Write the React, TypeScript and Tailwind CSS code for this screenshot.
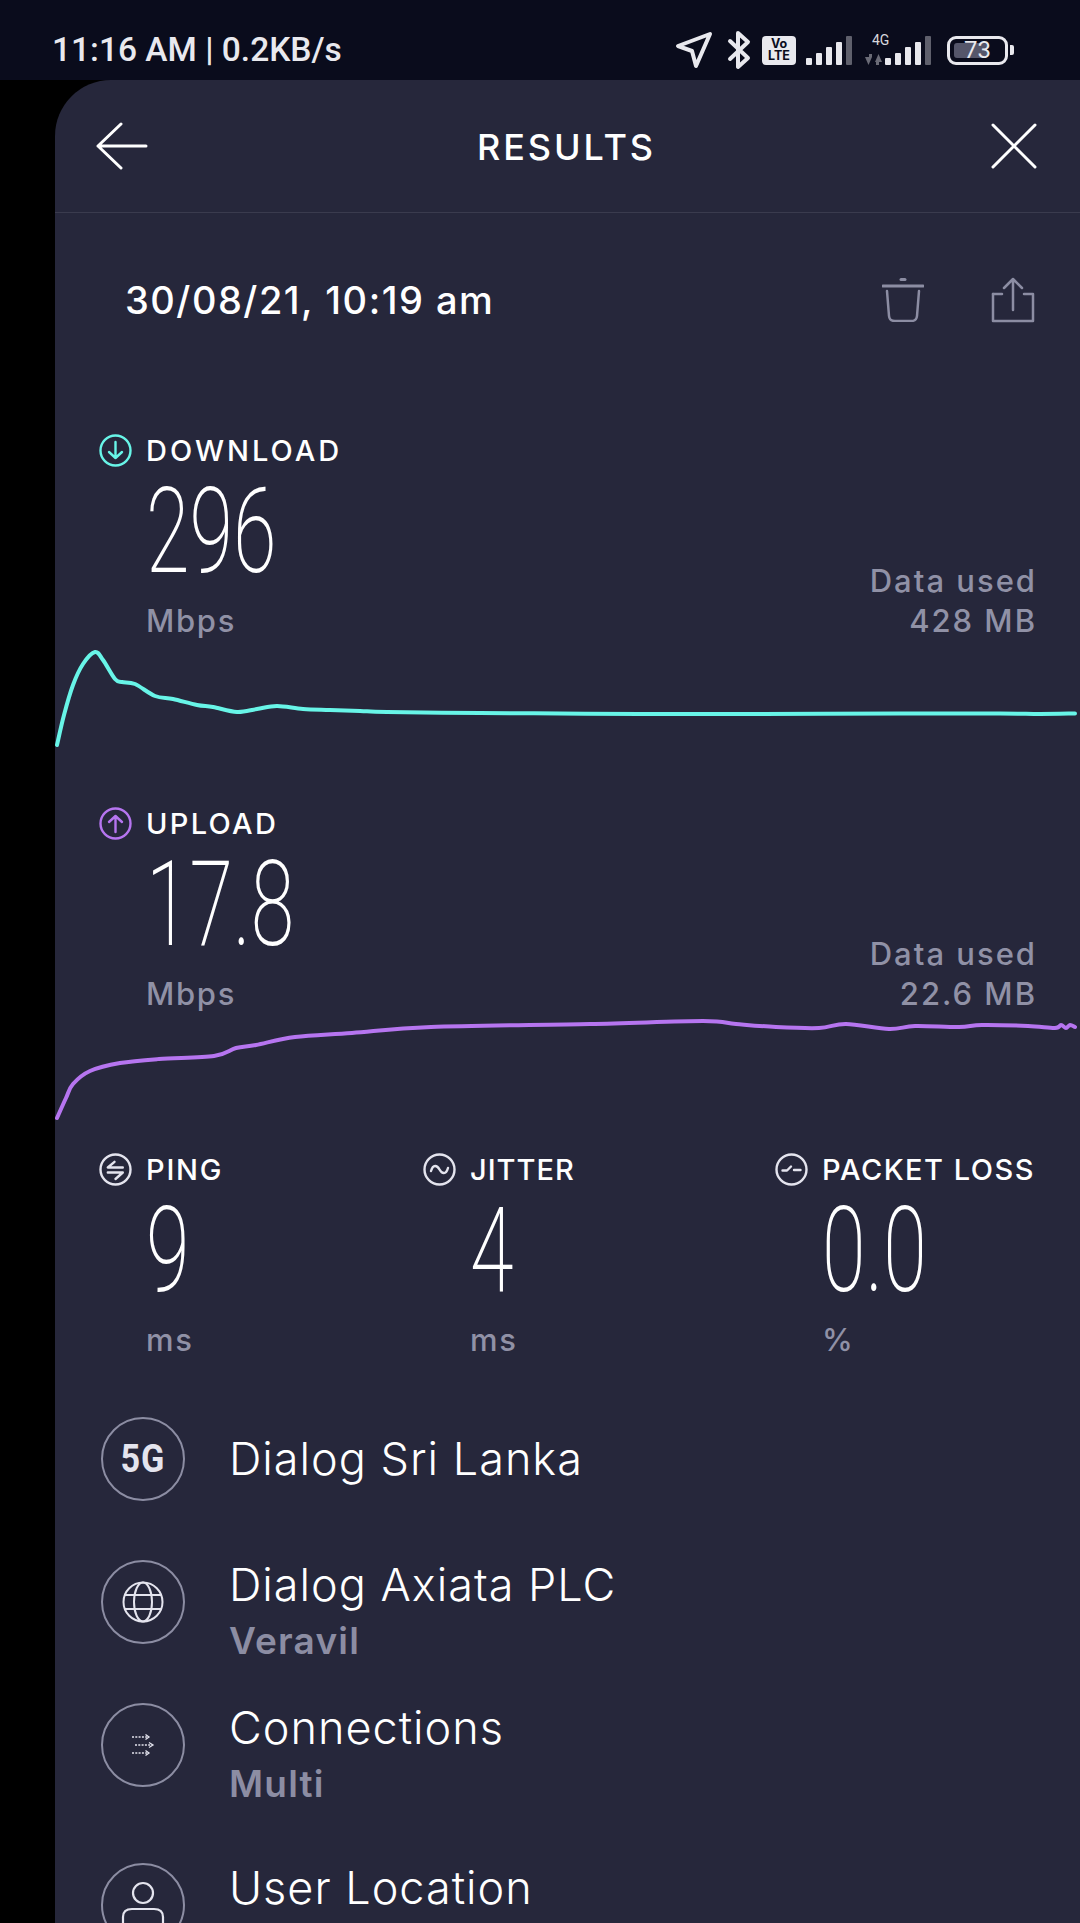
const downloadCurve: [number, number][] = [
  [57, 745], [64, 715], [73, 685], [83, 664], [95, 652], [103, 660], [115, 679], [122, 682], [135, 684], [155, 696],
  [173, 699], [197, 705], [213, 707], [237, 712], [257, 709], [277, 706], [303, 709], [330, 710], [360, 711], [387, 712],
  [480, 713], [560, 713.5], [640, 714], [760, 714], [900, 713.5], [1000, 713.5], [1040, 714], [1075, 713.5],
];

const uploadCurve: [number, number][] = [
  [57, 1118], [66, 1098], [73, 1084], [90, 1071], [120, 1063], [159, 1059], [214, 1056], [236, 1048], [256, 1045], [295, 1037],
  [352, 1033], [431, 1027], [590, 1024], [703, 1021], [736, 1024], [776, 1027], [819, 1028], [846, 1024], [889, 1029], [915, 1026],
  [959, 1027], [982, 1025], [1028, 1026], [1055, 1028], [1061, 1025], [1066, 1028], [1070, 1025], [1075, 1027],
];

function smoothPath(pts: [number, number][]) {
  let d = `M${pts[0][0]} ${pts[0][1]}`;
  for (let i = 0; i < pts.length - 1; i++) {
    const p0 = pts[i - 1] ?? pts[i];
    const p1 = pts[i];
    const p2 = pts[i + 1];
    const p3 = pts[i + 2] ?? p2;
    const c1x = p1[0] + (p2[0] - p0[0]) / 6;
    const c1y = p1[1] + (p2[1] - p0[1]) / 6;
    const c2x = p2[0] - (p3[0] - p1[0]) / 6;
    const c2y = p2[1] - (p3[1] - p1[1]) / 6;
    d += ` C${c1x} ${c1y} ${c2x} ${c2y} ${p2[0]} ${p2[1]}`;
  }
  return d;
}

function Ring({ color, children }: { color: string; children: React.ReactNode }) {
  return (
    <svg width="33" height="33" viewBox="0 0 33 33" fill="none" stroke={color} strokeWidth="2.4" strokeLinecap="round" strokeLinejoin="round" className="shrink-0">
      <circle cx="16.5" cy="16.5" r="15" />
      {children}
    </svg>
  );
}

function Metric({ icon, label, tracking, value, unit, used }: { icon: React.ReactNode; label: string; tracking: string; value: string; unit: string; used: string }) {
  return (
    <div className="flex items-end justify-between pl-[44px] pr-[43px]">
      <div>
        <Label icon={icon} text={label} tracking={tracking} />
        <BigValue value={value} />
        <Unit text={unit} />
      </div>
      <div className="text-right font-['Inter',sans-serif] text-[31px] font-medium leading-[40px] tracking-[2px] text-[#9091a6]">
        <div>Data used</div>
        <div>{used}</div>
      </div>
    </div>
  );
}

function Label({ icon, text, tracking }: { icon: React.ReactNode; text: string; tracking: string }) {
  return (
    <div className="flex h-[40px] items-center gap-[14px]">
      {icon}
      <span className={`whitespace-nowrap pt-[2px] font-['Inter',sans-serif] text-[29px] font-medium text-white ${tracking}`}>{text}</span>
    </div>
  );
}

function BigValue({ value }: { value: string }) {
  return (
    <div className="h-[118px] pl-[47px] pt-[7px]">
      <div className="origin-left scale-x-[0.67] whitespace-nowrap font-['Roboto',sans-serif] text-[118px] font-[175] leading-[111px] text-white">{value}</div>
    </div>
  );
}

function Unit({ text }: { text: string }) {
  return <div className="mt-[13px] pl-[47px] font-['Inter',sans-serif] text-[31px] font-medium leading-[40px] tracking-[1.7px] text-[#9091a6]">{text}</div>;
}

function Stat({ icon, label, tracking, value, unit }: { icon: React.ReactNode; label: string; tracking: string; value: string; unit: string }) {
  return (
    <div>
      <Label icon={icon} text={label} tracking={tracking} />
      <BigValue value={value} />
      <Unit text={unit} />
    </div>
  );
}

function InfoRow({ icon, title, sub, center }: { icon: React.ReactNode; title: string; sub?: string; center?: boolean }) {
  return (
    <div className={`flex gap-[44px] ${center ? "items-center" : "items-start"}`}>
      <div className="flex h-[84px] w-[84px] shrink-0 items-center justify-center rounded-full border-[2.5px] border-[#8c8da3]">{icon}</div>
      <div className="font-['Inter',sans-serif]">
        <div className="whitespace-nowrap text-[45px] font-light leading-[50px] tracking-[1px] text-white">{title}</div>
        {sub && <div className="mt-[11px] text-[37px] font-semibold leading-[40px] tracking-[1.2px] text-[#8c8da3]">{sub}</div>}
      </div>
    </div>
  );
}

function Bars({ width }: { width: number }) {
  const xs = [0, 10, 20, 30, 40];
  const tops = [22, 17, 11, 6, 0];
  return (
    <svg width={width} height="29" viewBox="0 0 46 29" className="shrink-0">
      {xs.map((x, i) => (
        <rect key={x} x={x} y={tops[i]} width="6" height={29 - tops[i]} rx="1" fill={i === 4 ? "#5f606c" : "#e9e9ee"} />
      ))}
    </svg>
  );
}

function StatusBar() {
  return (
    <div className="flex h-[80px] shrink-0 items-center justify-between bg-[#0a0c1c] pl-[52px] pr-[66px] pt-[20px]">
      <span className="font-['Roboto',sans-serif] text-[33.5px] font-medium text-[#e9e9ee]">11:16 AM | 0.2KB/s</span>
      <div className="flex items-center">
        <svg width="38" height="38" viewBox="0 0 38 38" fill="none" stroke="#e9e9ee" strokeWidth="4" strokeLinejoin="round" className="shrink-0">
          <path d="M3 15 L35 3 L21 35 L17 20 Z" />
        </svg>
        <svg width="24" height="40" viewBox="0 0 24 40" fill="none" stroke="#e9e9ee" strokeWidth="4" strokeLinecap="round" strokeLinejoin="round" className="ml-[14px] shrink-0">
          <path d="M3 11 L21 28 L11 37 V3 L21 12 L3 29" />
        </svg>
        <div className="ml-[11px] flex h-[29px] w-[34px] shrink-0 flex-col items-center justify-center rounded-[4px] bg-[#e9e9ee] font-['Inter',sans-serif] text-[12.5px] font-bold leading-[12px] text-[#0a0c1c]">
          <span>Vo</span>
          <span>LTE</span>
        </div>
        <div className="ml-[10px]">
          <Bars width={46} />
        </div>
        <div className="relative ml-[13px] flex h-[29px] items-end">
          <span className="absolute left-[7px] top-[-3px] font-['Roboto',sans-serif] text-[14px] leading-[14px] text-[#d8d8de]">4G</span>
          <svg width="19" height="11" viewBox="0 0 19 11" fill="#6a6b76" className="shrink-0">
            <path d="M0 3H4V0H7V3 L3.5 11Z" />
            <path d="M10 8 L13.5 0 L17 8H14V11H11V8Z" />
          </svg>
          <Bars width={48} />
        </div>
        <div className="ml-[15px] flex items-center gap-[2px]">
          <div className="relative flex h-[29px] w-[61px] items-center rounded-[9px] border-[3px] border-[#e9e9ee] p-[4px]">
            <div className="h-full w-[70%] rounded-[3px] bg-[#55566a]" />
            <span className="absolute inset-0 text-center font-['Roboto',sans-serif] text-[24px] leading-[23px] text-[#e9e9ee]">73</span>
          </div>
          <div className="h-[10px] w-[4px] rounded-r-[2px] bg-[#e9e9ee]" />
        </div>
      </div>
    </div>
  );
}

export default function App() {
  return (
    <div className="flex h-[1923px] w-[1080px] flex-col overflow-hidden bg-black">
      <StatusBar />
      <div className="ml-[55px] shrink-0 rounded-tl-[56px] bg-[#26273b] pb-[60px]">
        <header className="grid h-[133px] grid-cols-[1fr_auto_1fr] items-center border-b border-[#3a3b4e] pl-[41px] pr-[43px]">
          <svg width="52" height="48" viewBox="0 0 52 48" fill="none" stroke="white" strokeWidth="3" strokeLinecap="round" strokeLinejoin="round">
            <path d="M25 2 L2 24 L25 46 M2 24 H50" />
          </svg>
          <div className="pt-[2px] font-['Inter',sans-serif] text-[36px] font-[550] tracking-[2.9px] text-white">RESULTS</div>
          <svg width="46" height="46" viewBox="0 0 46 46" fill="none" stroke="white" strokeWidth="3" strokeLinecap="round" className="justify-self-end">
            <path d="M2 2 L44 44 M44 2 L2 44" />
          </svg>
        </header>

        <div className="flex h-[174px] items-center justify-between pl-[70px] pr-[45px]">
          <div className="font-['Inter',sans-serif] text-[38px] font-medium tracking-[1.5px] text-white">30/08/21, 10:19 am</div>
          <div className="flex items-center gap-[67px]">
            <svg width="42" height="44" viewBox="0 0 42 44" fill="none" stroke="#8c8da3" strokeWidth="2.5" strokeLinecap="round">
              <path d="M1 8 H41" strokeWidth="3" />
              <path d="M19 1.5 H23" strokeWidth="3" />
              <path d="M5 13 L7 38 Q7.5 43 13 43 H29 Q34.5 43 35 38 L37 13" />
            </svg>
            <svg width="44" height="46" viewBox="0 0 44 46" fill="none" stroke="#8c8da3" strokeWidth="2.5" strokeLinecap="round" strokeLinejoin="round">
              <path d="M22 33 V2 M13 11 L22 2 L31 11" />
              <path d="M2 17 V44 H42 V17 H33" />
              <path d="M2 17 H11" />
            </svg>
          </div>
        </div>

        <div className="mt-[43px]">
          <Metric
            label="DOWNLOAD"
            tracking="tracking-[3px]"
            value="296"
            unit="Mbps"
            used="428 MB"
            icon={
              <Ring color="#68f5e8">
                <path d="M16.5 8 V24 M10 18 L16.5 24 L23 18" />
              </Ring>
            }
          />
          <svg width="1025" height="122" viewBox="55 641 1025 122" fill="none" className="block">
            <path d={smoothPath(downloadCurve)} stroke="#68f5e8" strokeWidth="4" strokeLinecap="round" />
          </svg>
        </div>

        <div className="mt-[40px]">
          <Metric
            label="UPLOAD"
            tracking="tracking-[2.3px]"
            value="17.8"
            unit="Mbps"
            used="22.6 MB"
            icon={
              <Ring color="#b675f0">
                <path d="M16.5 25 V9 M10 15 L16.5 9 L23 15" />
              </Ring>
            }
          />
          <svg width="1025" height="116" viewBox="55 1014 1025 116" fill="none" className="block">
            <path d={smoothPath(uploadCurve)} stroke="#b675f0" strokeWidth="4" strokeLinecap="round" />
          </svg>
        </div>

        <div className="mt-[19px] grid grid-cols-[324px_352px_1fr] pl-[44px]">
          <Stat
            label="PING"
            tracking="tracking-[1.8px]"
            value="9"
            unit="ms"
            icon={
              <Ring color="#e4e4ee">
                <path d="M15.5 8.8 L8.8 14.5 H23.8 M8.8 19.5 H23.8 L16.5 26" />
              </Ring>
            }
          />
          <Stat
            label="JITTER"
            tracking="tracking-[1px]"
            value="4"
            unit="ms"
            icon={
              <Ring color="#e4e4ee">
                <path d="M8 18 C10 11 14 12 16.5 16.5 C19 21 23 22 25 15" />
              </Ring>
            }
          />
          <Stat
            label="PACKET LOSS"
            tracking="tracking-[1.5px]"
            value="0.0"
            unit="%"
            icon={
              <Ring color="#e4e4ee">
                <path d="M7.5 17.5 H12 L16 13.5 M19 17 H25.5" />
              </Ring>
            }
          />
        </div>

        <div className="mt-[57px] flex flex-col pl-[46px]">
          <InfoRow center title="Dialog Sri Lanka" icon={<span className="scale-x-90 font-['Roboto',sans-serif] text-[38px] font-bold tracking-[1px] text-[#e4e4ee]">5G</span>} />
          <div className="mt-[59px]">
            <InfoRow
              title="Dialog Axiata PLC"
              sub="Veravil"
              icon={
                <svg width="42" height="42" viewBox="0 0 42 42" fill="none" stroke="#e4e4ee" strokeWidth="2">
                  <circle cx="21" cy="21" r="19.5" />
                  <ellipse cx="21" cy="21" rx="9" ry="19.5" />
                  <path d="M3 14 H39 M3 28 H39" />
                </svg>
              }
            />
          </div>
          <div className="mt-[42px]">
            <InfoRow
              title="Connections"
              sub="Multi"
              icon={
                <svg width="24" height="24" viewBox="0 0 24 24" fill="none" stroke="#e4e4ee" strokeWidth="1.3">
                  <path d="M1 4 H17" strokeDasharray="2 1.3" />
                  <path d="M14.5 1.5 L18 4 L14.5 6.5" />
                  <path d="M4 12 H21" strokeDasharray="2 1.3" />
                  <path d="M18 9.5 L22 12 L18 14.5" />
                  <path d="M1 20 H17" strokeDasharray="2 1.3" />
                  <path d="M14.5 17.5 L18 20 L14.5 22.5" />
                </svg>
              }
            />
          </div>
          <div className="mt-[59px]">
            <InfoRow
              title="User Location"
              icon={
                <svg width="44" height="48" viewBox="0 0 44 48" fill="none" stroke="#e4e4ee" strokeWidth="2.2">
                  <circle cx="22" cy="12" r="10" />
                  <path d="M2 46 V36 Q2 28 11 28 H33 Q42 28 42 36 V46 Z" />
                </svg>
              }
            />
          </div>
        </div>
      </div>
    </div>
  );
}
